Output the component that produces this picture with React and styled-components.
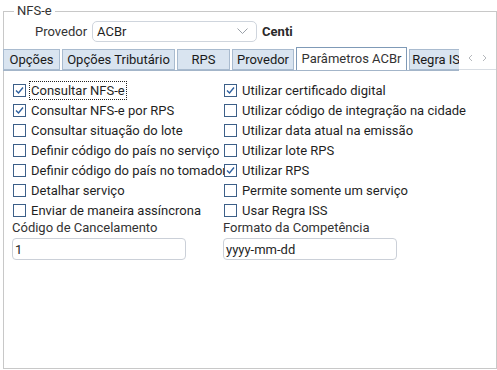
import styled, { createGlobalStyle } from "styled-components";

const GlobalStyle = createGlobalStyle`
  html, body {
    margin: 0;
    padding: 0;
    background: #fff;
  }
  body {
    font-family: Roboto, "Liberation Sans", sans-serif;
    font-size: 13px;
    color: #1f1f1f;
  }
`;

const leftOptions = [
  { label: "Consultar NFS-e", checked: true, focused: true },
  { label: "Consultar NFS-e por RPS", checked: true },
  { label: "Consultar situação do lote" },
  { label: "Definir código do país no serviço" },
  { label: "Definir código do país no tomador" },
  { label: "Detalhar serviço" },
  { label: "Enviar de maneira assíncrona" },
];

const rightOptions = [
  { label: "Utilizar certificado digital", checked: true },
  { label: "Utilizar código de integração na cidade" },
  { label: "Utilizar data atual na emissão" },
  { label: "Utilizar lote RPS" },
  { label: "Utilizar RPS", checked: true },
  { label: "Permite somente um serviço" },
  { label: "Usar Regra ISS" },
];

const tabs = [
  { label: "Opções", width: 57 },
  { label: "Opções Tributário", width: 113 },
  { label: "RPS", width: 53 },
  { label: "Provedor", width: 62 },
  { label: "Parâmetros ACBr", width: 111, active: true },
  { label: "Regra ISS", width: 62 },
];

function Check({ checked }) {
  return (
    <Box>
      {checked && (
        <svg width="11" height="11" viewBox="0 0 11 11">
          <path d="M2 5.5 L4.5 8 L9 2.5" fill="none" stroke="#2d5f9e" strokeWidth="1.4" />
        </svg>
      )}
    </Box>
  );
}

function Option({ label, checked, focused }) {
  return (
    <OptionRow>
      <Check checked={checked} />
      <OptionText $focused={focused}>{label}</OptionText>
    </OptionRow>
  );
}

export default function App() {
  const rows = leftOptions.map((o, i) => [o, rightOptions[i]]);
  return (
    <Page>
      <GlobalStyle />
      <GroupBox>
        <Legend>NFS-e</Legend>
        <ProviderRow>
          <span>Provedor</span>
          <Combo>
            <span>ACBr</span>
            <svg width="11" height="7" viewBox="0 0 11 7">
              <path d="M0.5 0.5 L5.5 5.5 L10.5 0.5" fill="none" stroke="#9aa0a8" strokeWidth="1" />
            </svg>
          </Combo>
          <Strong>Centi</Strong>
        </ProviderRow>
        <TabBar>
          <TabStrip>
            {tabs.map((t) => (
              <Tab key={t.label} $width={t.width} $active={t.active}>
                {t.label}
              </Tab>
            ))}
          </TabStrip>
          <Arrows>
            <svg width="5" height="8" viewBox="0 0 5 8">
              <path d="M4 1 L1 4 L4 7" fill="none" stroke="#b5b8bc" strokeWidth="1" />
            </svg>
            <svg width="5" height="8" viewBox="0 0 5 8">
              <path d="M1 1 L4 4 L1 7" fill="none" stroke="#b5b8bc" strokeWidth="1" />
            </svg>
          </Arrows>
        </TabBar>
        <Panel>
          <OptionsGrid>
            {rows.map(([l, r]) => [
              <Option key={l.label} {...l} />,
              <Option key={r.label} {...r} />,
            ])}
          </OptionsGrid>
          <FieldsRow>
            <Field>
              <FieldLabel>Código de Cancelamento</FieldLabel>
              <TextBox>1</TextBox>
            </Field>
            <Field>
              <FieldLabel>Formato da Competência</FieldLabel>
              <TextBox>yyyy-mm-dd</TextBox>
            </Field>
          </FieldsRow>
        </Panel>
      </GroupBox>
    </Page>
  );
}

const Page = styled.div`
  width: 497px;
  height: 370px;
  overflow: hidden;
`;

const GroupBox = styled.fieldset`
  box-sizing: border-box;
  margin: 4px 0 0 3px;
  padding: 0;
  width: 494px;
  height: 365px;
  border: 1px solid #c8c8c8;
  min-width: 0;
`;

const Legend = styled.legend`
  margin-left: 10px;
  padding: 0 3px;
  line-height: 14px;
  color: #333;
`;

const ProviderRow = styled.div`
  display: flex;
  align-items: center;
  gap: 5px;
  margin-top: 3px;
  padding-left: 31px;
  height: 21px;
  color: #333;
`;

const Combo = styled.div`
  box-sizing: border-box;
  width: 165px;
  height: 21px;
  border: 1px solid #cfd5dd;
  border-radius: 5px;
  display: flex;
  align-items: center;
  justify-content: space-between;
  padding: 0 8px 0 4px;
  color: #1f1f1f;
`;

const Strong = styled.span`
  font-weight: bold;
  color: #2a2a2a;
`;

const TabBar = styled.div`
  display: flex;
  margin: 5px 0 0 -1px;
  height: 24px;
`;

const TabStrip = styled.div`
  flex: 1;
  min-width: 0;
  display: flex;
  align-items: flex-end;
  gap: 2px;
  overflow: hidden;
  border-bottom: 1px solid #a3b5c9;
  height: 23px;
`;

const Tab = styled.div`
  flex-shrink: 0;
  box-sizing: border-box;
  width: ${(p) => p.$width}px;
  height: ${(p) => (p.$active ? 24 : 21)}px;
  margin-bottom: ${(p) => (p.$active ? -1 : 0)}px;
  border: 1px solid ${(p) => (p.$active ? "#7f9ab7" : "#a9bbcf")};
  border-bottom: ${(p) => (p.$active ? "none" : "1px solid #a9bbcf")};
  background: ${(p) => (p.$active ? "#fff" : "#d9e4f0")};
  color: ${(p) => (p.$active ? "#333" : "#1a1a1a")};
  display: flex;
  align-items: center;
  justify-content: center;
  white-space: nowrap;
  ${(p) => (p.$active ? "align-items: flex-start; padding-top: 3px;" : "")}
`;

const Arrows = styled.div`
  width: 37px;
  height: 23px;
  display: flex;
  align-items: center;
  justify-content: space-around;
  padding: 0 4px;
  box-sizing: border-box;
  border-bottom: 1px solid #d8dde3;
`;

const Panel = styled.div`
  padding: 9px 0 0 9px;
`;

const OptionsGrid = styled.div`
  display: grid;
  grid-template-columns: 211px auto;
  grid-auto-rows: 20px;
`;

const OptionRow = styled.div`
  display: flex;
  align-items: center;
  gap: 5px;
  white-space: nowrap;
  overflow: hidden;
`;

const Box = styled.span`
  flex-shrink: 0;
  box-sizing: border-box;
  width: 13px;
  height: 13px;
  border: 1px solid #3c5f88;
  background: #fff;
  display: flex;
  align-items: center;
  justify-content: center;
`;

const OptionText = styled.span`
  line-height: 15px;
  color: #1f1f1f;
  outline: ${(p) => (p.$focused ? "1px dotted #222" : "none")};
  outline-offset: 1px;
`;

const FieldsRow = styled.div`
  display: grid;
  grid-template-columns: 211px 173px;
  margin-left: -1px;
`;

const Field = styled.div`
  display: flex;
  flex-direction: column;
  gap: 2px;
`;

const FieldLabel = styled.span`
  line-height: 16px;
  color: #333;
`;

const TextBox = styled.div`
  box-sizing: border-box;
  width: ${174}px;
  height: 22px;
  border: 1px solid #cbd0d8;
  border-radius: 4px;
  padding: 0 2px;
  display: flex;
  align-items: center;
  color: #1f1f1f;
`;
